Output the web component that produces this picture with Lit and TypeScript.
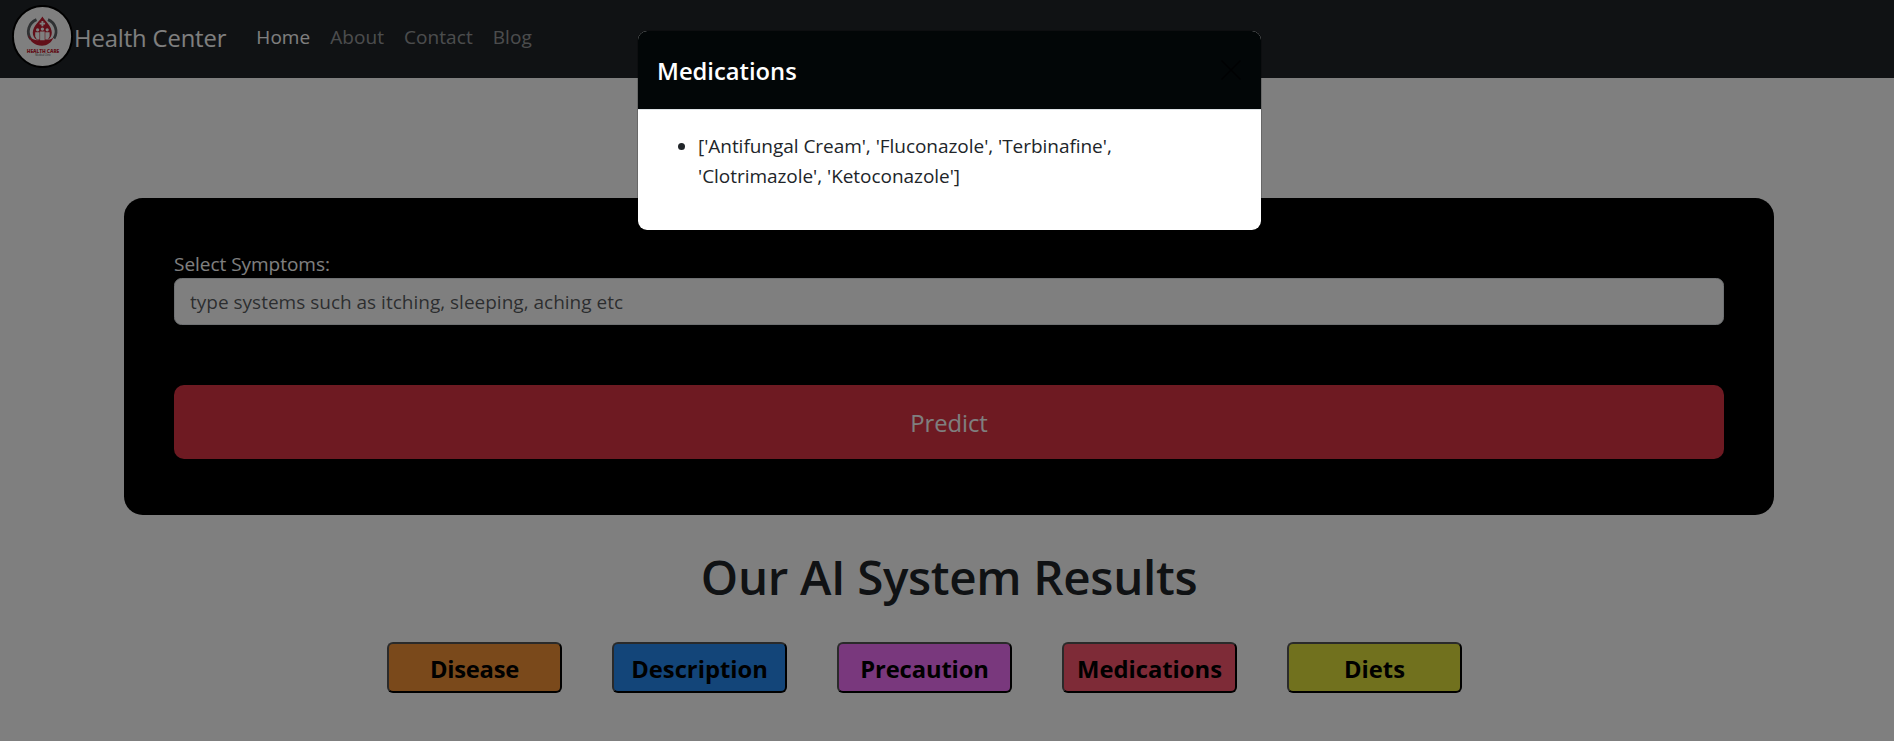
import { LitElement, html, css } from "lit";
import { customElement } from "lit/decorators.js";
import { classMap } from "lit/directives/class-map.js";

@customElement("health-logo")
class HealthLogo extends LitElement {
  static styles = css`
    :host { display: block; width: 61px; height: 63px; }
    svg { display: block; }
    text { font-family: "Open Sans", sans-serif; text-anchor: middle; }
    .name { font-size: 5.8px; font-weight: 800; fill: #c41f33; }
    .sub { font-size: 2.9px; fill: #555; }
  `;
  render() {
    return html`
      <svg width="61" height="63" viewBox="12 5 61 63">
        <ellipse cx="42.5" cy="36.5" rx="29.6" ry="30.6" fill="#fff" stroke="#000" stroke-width="2" />
        <path d="M36.5 19.6A13 13 0 0 0 30.6 39" fill="none" stroke="#5f6266" stroke-width="2.8" />
        <path d="M48 19.6A13 13 0 0 1 54 38.6" fill="none" stroke="#5f6266" stroke-width="2.8" />
        <path d="M42.4 16.4C44.4 20.5 51.8 25.6 51.8 32.6C51.8 38 47.6 41.6 42.4 41.6S32.8 38 32.8 32.6C32.8 25.6 40.4 20.5 42.4 16.4Z" fill="#c41f33" />
        <path d="M28 34.8C31.5 40 36 40.4 41 40.4C46 40.4 50.8 40 53.5 37.6C51.5 42.8 47 45.8 42 45.8C35 45.8 29.6 41.5 28 34.8Z" fill="#c41f33" />
        <path d="M42.4 20.9v5.4M39.7 23.6h5.4" stroke="#fff" stroke-width="1.9" />
        <g fill="#fff">
          <circle cx="42.4" cy="29.1" r="1.7" />
          <circle cx="37.6" cy="29.8" r="1.6" />
          <circle cx="47.2" cy="29.8" r="1.6" />
          <path d="M35.2 32.2h4.3v7.3h-2.6l-1.7-3zM40.1 31.5h4.6v8.8h-4.6zM45.3 32.2h4.3v4.3l-1.7 3h-2.6z" />
        </g>
        <text class="name" x="43" y="52.7" textLength="32.4" lengthAdjust="spacingAndGlyphs">HEALTH CARE</text>
        <text class="sub" x="43" y="56.4" textLength="15.6" lengthAdjust="spacingAndGlyphs">Medical Clinic</text>
      </svg>
    `;
  }
}

@customElement("app-root")
class AppRoot extends LitElement {
  static styles = css`
    * { box-sizing: border-box; }
    :host {
      display: block;
      position: relative;
      height: 741px;
      overflow: hidden;
      background: #fff;
      color: #212529;
      font: 400 19px/30px "Open Sans", "Noto Sans", sans-serif;
    }
    nav {
      display: flex;
      align-items: flex-start;
      height: 78px;
      padding: 5px 0 0 12px;
      background: #212529;
    }
    .brand { display: flex; color: #fff; font-size: 23.75px; letter-spacing: -0.1px; }
    .brand span { margin-top: 18px; padding-left: 1px; }
    .links { display: flex; margin: 17px 0 0 20px; }
    .link { padding: 0 10px; color: rgba(255, 255, 255, 0.55); letter-spacing: 0.06px; }
    .link.active { color: #fff; }
    .card {
      height: 317px;
      margin: 120px 120px 0 124px;
      padding: 51px 50px 0;
      border-radius: 18.75px;
      background: #000;
      color: #fff;
    }
    label { display: block; height: 29px; letter-spacing: -0.03px; }
    input {
      display: block;
      width: 100%;
      height: 47px;
      padding: 0 15px;
      border: 1px solid #dee2e6;
      border-radius: 7.5px;
      background: #fff;
      font: inherit;
    }
    input::placeholder { color: rgba(33, 37, 41, 0.75); opacity: 1; }
    .predict {
      display: block;
      width: 100%;
      height: 74px;
      margin-top: 60px;
      padding: 2px 0 0;
      border: 0;
      border-radius: 10px;
      background: #dc3545;
      color: #fff;
      font: 400 23.75px/30px "Open Sans", sans-serif;
    }
    h1 {
      margin: 32px 0 0;
      padding-left: 4px;
      text-align: center;
      font-size: 47.5px;
      font-weight: 600;
      line-height: 60px;
      letter-spacing: -0.33px;
    }
    .results { display: flex; gap: 50px; margin: 35px 0 0 387px; }
    .result {
      width: 175px;
      height: 51px;
      padding: 3px 0 0;
      border: 2px solid;
      border-color: #555 #000 #000 #555;
      border-radius: 6px;
      color: #000;
      font: 700 23.75px/30px "Open Sans", sans-serif;
    }
    .disease { background: #f59336; letter-spacing: -0.25px; }
    .description { background: #268af3; }
    .precaution { background: #f370fb; letter-spacing: -0.12px; }
    .medications { background: #fc566e; }
    .diets { background: #e3e33c; }
    .backdrop { position: absolute; inset: 0; background: rgba(0, 0, 0, 0.5); }
    .modal {
      position: absolute;
      left: 637px;
      top: 30px;
      width: 625px;
      height: 201px;
      border: 1px solid rgba(0, 0, 0, 0.18);
      border-radius: 10px;
      background: #fff;
      background-clip: padding-box;
    }
    .modal-head {
      display: flex;
      justify-content: space-between;
      height: 79px;
      padding: 25px 19px 0 19px;
      border-bottom: 1px solid #dee2e6;
      border-radius: 9px 9px 0 0;
      background: #020607;
    }
    h2 { margin: 0; color: #fff; font-size: 23.75px; font-weight: 600; line-height: 30px; }
    .close { display: block; margin-top: 3px; }
    ul { margin: 0; padding: 21px 100px 0 60px; letter-spacing: -0.04px; }
  `;

  links = ["Home", "About", "Contact", "Blog"];
  results = ["Disease", "Description", "Precaution", "Medications", "Diets"];

  render() {
    return html`
      <nav>
        <div class="brand"><health-logo></health-logo><span>Health Center</span></div>
        <div class="links">
          ${this.links.map((l, i) => html`<div class=${classMap({ link: true, active: i === 0 })}>${l}</div>`)}
        </div>
      </nav>
      <section class="card">
        <label>Select Symptoms:</label>
        <input placeholder="type systems such as itching, sleeping, aching etc" />
        <button class="predict">Predict</button>
      </section>
      <h1>Our AI System Results</h1>
      <div class="results">
        ${this.results.map((r) => html`<button class="result ${r.toLowerCase()}">${r}</button>`)}
      </div>
      <div class="backdrop"></div>
      <div class="modal">
        <div class="modal-head">
          <h2>Medications</h2>
          <svg class="close" width="22" height="22" viewBox="0 0 22 22">
            <path d="M1.5 1.5L20.5 20.5M20.5 1.5L1.5 20.5" stroke="#000" stroke-opacity="0.7" stroke-width="1.6" />
          </svg>
        </div>
        <ul>
          <li>['Antifungal Cream', 'Fluconazole', 'Terbinafine', 'Clotrimazole', 'Ketoconazole']</li>
        </ul>
      </div>
    `;
  }
}
